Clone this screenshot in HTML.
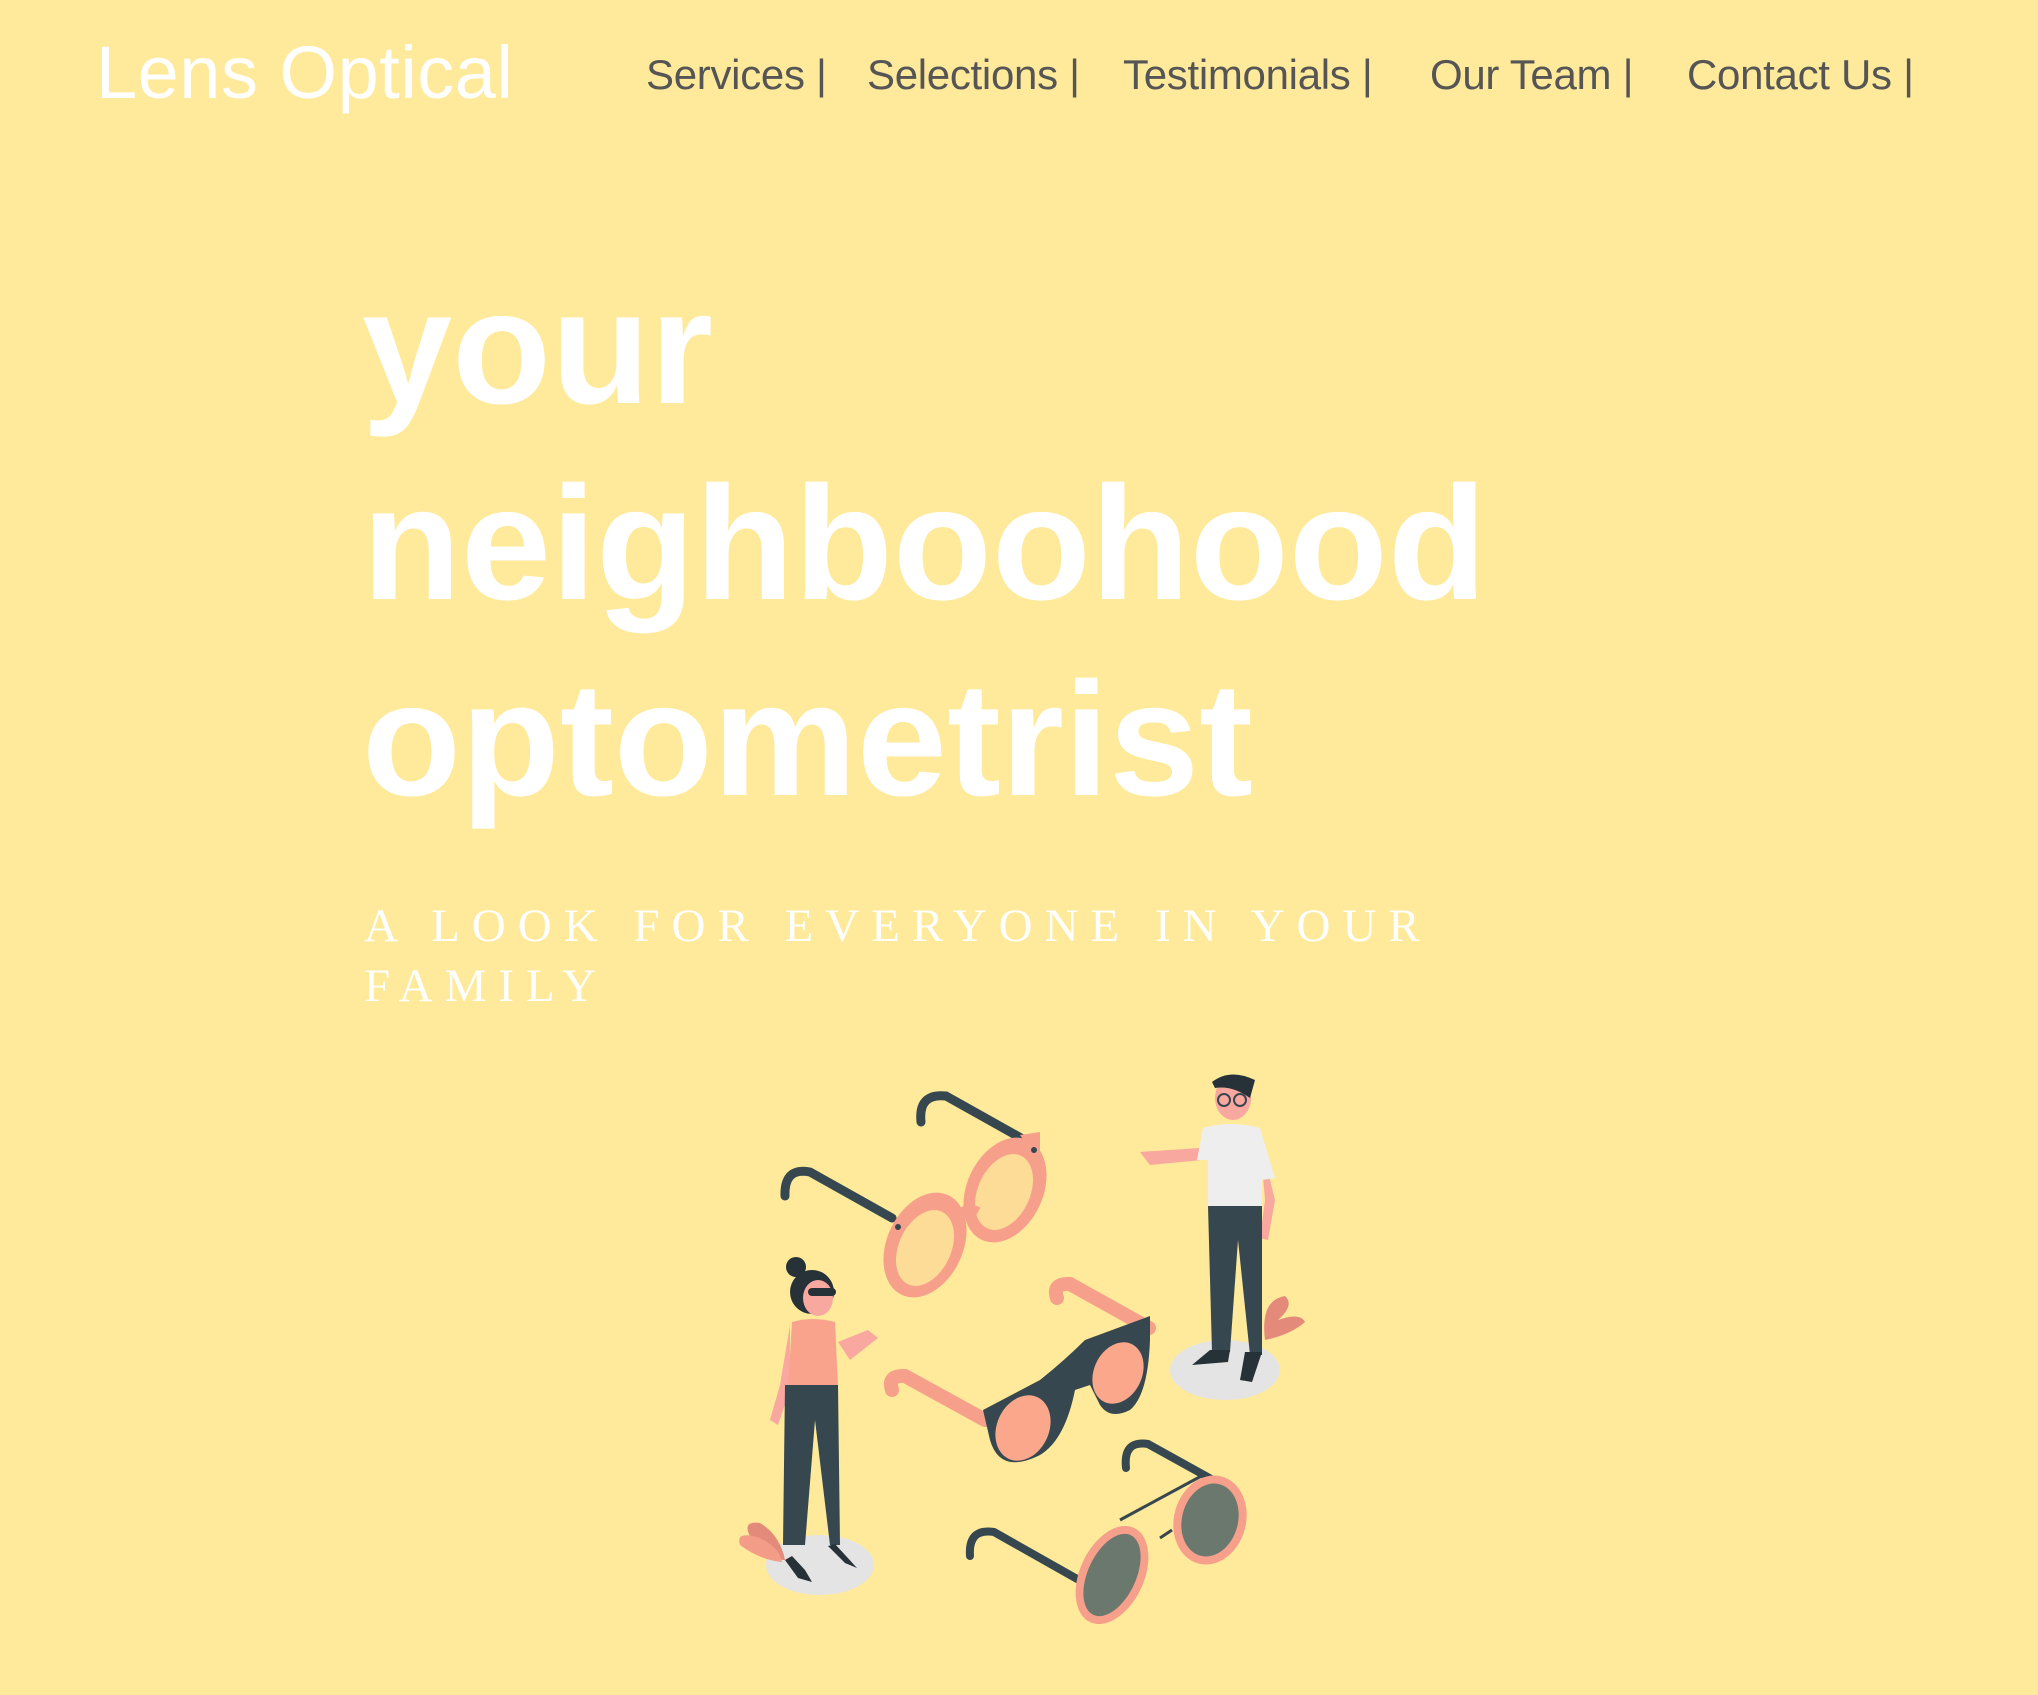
<!DOCTYPE html>
<html><head><meta charset="utf-8"><style>
html,body{margin:0;padding:0}
body{width:2038px;height:1695px;background:#FEEA9A;position:relative;overflow:hidden;font-family:"Liberation Sans",sans-serif}
.logo{position:absolute;left:96px;top:28px;font-size:74px;color:#fff;line-height:90px;white-space:nowrap;letter-spacing:0.5px}
.nav{position:absolute;top:50px;font-size:42px;color:#555;line-height:50px;white-space:nowrap;letter-spacing:-0.3px}
h1{position:absolute;left:362px;top:0;margin:0;color:#fff;font-size:162px;font-weight:bold;letter-spacing:0px;line-height:196px;white-space:nowrap}
h1 span{position:absolute;left:0}
.sub{position:absolute;left:364px;top:896px;font-family:"Liberation Serif",serif;font-size:47px;letter-spacing:12px;color:#fff;line-height:60px;white-space:nowrap}
svg{position:absolute;left:0;top:0}
</style></head><body>
<div class="logo">Lens Optical</div>
<div class="nav" style="left:646px">Services |</div>
<div class="nav" style="left:867px">Selections |</div>
<div class="nav" style="left:1123px">Testimonials |</div>
<div class="nav" style="left:1430px">Our Team |</div>
<div class="nav" style="left:1687px">Contact Us |</div>
<h1><span style="top:250px">your</span><span style="top:446px">neighboohood</span><span style="top:642px">optometrist</span></h1>
<div class="sub">A LOOK FOR EVERYONE IN YOUR<br>FAMILY</div>
<svg width="2038" height="1695" viewBox="0 0 2038 1695">
<ellipse cx="820" cy="1565" rx="54" ry="30" fill="#E4E4E4"/>
<ellipse cx="1225" cy="1370" rx="55" ry="30" fill="#E4E4E4"/>
<path d="M921 1122 Q918 1093 946 1096 L1021 1138" stroke="#37474F" stroke-width="9" fill="none" stroke-linecap="round"/>
<path d="M785 1196 Q784 1167 810 1172 L892 1218" stroke="#37474F" stroke-width="9" fill="none" stroke-linecap="round"/>
<ellipse cx="1005" cy="1190" rx="38" ry="55" transform="rotate(25 1005 1190)" fill="#F6A08C"/>
<ellipse cx="1004" cy="1192" rx="26" ry="40" transform="rotate(25 1004 1192)" fill="#FCDC96"/>
<path d="M1020 1135 L1040 1132 L1040 1165 Z" fill="#F6A08C"/>
<ellipse cx="925" cy="1245" rx="38" ry="55" transform="rotate(25 925 1245)" fill="#F6A08C"/>
<ellipse cx="925" cy="1248" rx="26" ry="40" transform="rotate(25 925 1248)" fill="#FCDC96"/>
<path d="M955 1220 Q965 1205 978 1212" stroke="#F6A08C" stroke-width="10" fill="none"/>
<circle cx="898" cy="1227" r="3" fill="#37474F"/><circle cx="1034" cy="1150" r="3" fill="#37474F"/>
<path d="M1057 1298 Q1052 1283 1070 1284 L1149 1328" stroke="#F6A08C" stroke-width="14" fill="none" stroke-linecap="round"/>
<path d="M892 1390 Q887 1375 905 1376 L985 1420" stroke="#F6A08C" stroke-width="14" fill="none" stroke-linecap="round"/>
<path d="M983 1410 L1040 1380 Q1065 1360 1085 1340 L1150 1316 L1150 1340 Q1148 1395 1130 1410 Q1110 1420 1100 1405 L1090 1385 L1075 1390 Q1065 1440 1040 1455 Q1000 1475 990 1440 Z" fill="#37474F"/>
<ellipse cx="1023" cy="1428" rx="26" ry="34" transform="rotate(25 1023 1428)" fill="#FBA78C"/>
<ellipse cx="1118" cy="1373" rx="24" ry="32" transform="rotate(25 1118 1373)" fill="#FBA78C"/>
<path d="M1126 1468 Q1123 1440 1148 1444 L1213 1480" stroke="#37474F" stroke-width="8" fill="none" stroke-linecap="round"/>
<path d="M970 1556 Q968 1528 994 1532 L1086 1584" stroke="#37474F" stroke-width="8" fill="none" stroke-linecap="round"/>
<path d="M1120 1520 L1205 1474" stroke="#37474F" stroke-width="3"/>
<path d="M1160 1538 L1172 1530" stroke="#37474F" stroke-width="3"/>
<ellipse cx="1112" cy="1575" rx="32" ry="52" transform="rotate(25 1112 1575)" fill="#F6A08C"/>
<ellipse cx="1112" cy="1575" rx="24" ry="44" transform="rotate(25 1112 1575)" fill="#6B786E"/>
<ellipse cx="1210" cy="1520" rx="36" ry="45" transform="rotate(15 1210 1520)" fill="#F6A08C"/>
<ellipse cx="1210" cy="1520" rx="28" ry="37" transform="rotate(15 1210 1520)" fill="#6B786E"/>
<path d="M752 1540 Q740 1520 760 1523 Q780 1535 785 1560 Q770 1560 752 1540 Z" fill="#E48A7A"/>
<path d="M740 1545 Q735 1530 760 1538 Q780 1548 782 1562 Q760 1560 740 1545 Z" fill="#F39C88"/>
<path d="M1265 1340 Q1260 1300 1285 1296 Q1295 1305 1278 1320 Q1300 1312 1305 1322 Q1290 1335 1265 1340 Z" fill="#E48A7A"/>
<circle cx="796" cy="1267" r="10" fill="#263238"/>
<circle cx="812" cy="1292" r="22" fill="#263238"/>
<ellipse cx="818" cy="1298" rx="15" ry="18" fill="#F9A8A0"/>
<rect x="808" y="1288" width="28" height="8" rx="4" fill="#263238"/>
<path d="M838 1342 L868 1330 L878 1338 L850 1360 Z" fill="#F9A8A0"/>
<path d="M790 1325 L780 1385 L770 1420 L778 1425 L790 1390 Z" fill="#F9A8A0"/>
<path d="M792 1322 Q812 1316 835 1322 L838 1388 L788 1390 Z" fill="#F9A28C"/>
<path d="M785 1385 L838 1385 L840 1545 L830 1545 L815 1420 L805 1545 L783 1545 Z" fill="#37474F"/>
<path d="M785 1560 L798 1578 L812 1582 L805 1570 L792 1556 Z" fill="#263238"/>
<path d="M828 1546 L845 1563 L857 1568 L846 1556 L835 1544 Z" fill="#263238"/>
<ellipse cx="1233" cy="1098" rx="18" ry="22" fill="#F9A8A0"/>
<path d="M1212 1082 Q1230 1068 1255 1080 L1250 1098 Q1232 1085 1215 1088 Z" fill="#263238"/>
<circle cx="1224" cy="1100" r="6" fill="none" stroke="#37474F" stroke-width="2"/>
<circle cx="1240" cy="1100" r="6" fill="none" stroke="#37474F" stroke-width="2"/>
<path d="M1140 1152 L1200 1148 L1202 1160 L1150 1165 Z" fill="#F9A8A0"/>
<path d="M1260 1140 L1275 1200 L1268 1240 L1260 1238 L1265 1200 Z" fill="#F9A8A0"/>
<path d="M1203 1128 Q1230 1120 1260 1128 L1275 1178 L1262 1180 L1262 1210 Q1235 1215 1208 1208 L1208 1160 L1197 1160 Z" fill="#EEEEEE"/>
<path d="M1208 1206 L1262 1206 L1262 1355 L1250 1355 L1238 1240 L1230 1352 L1212 1352 Z" fill="#37474F"/>
<path d="M1210 1350 L1230 1350 L1228 1362 L1192 1365 Z" fill="#263238"/>
<path d="M1245 1352 L1262 1352 L1252 1382 L1240 1380 Z" fill="#263238"/>
</svg>
</body></html>
